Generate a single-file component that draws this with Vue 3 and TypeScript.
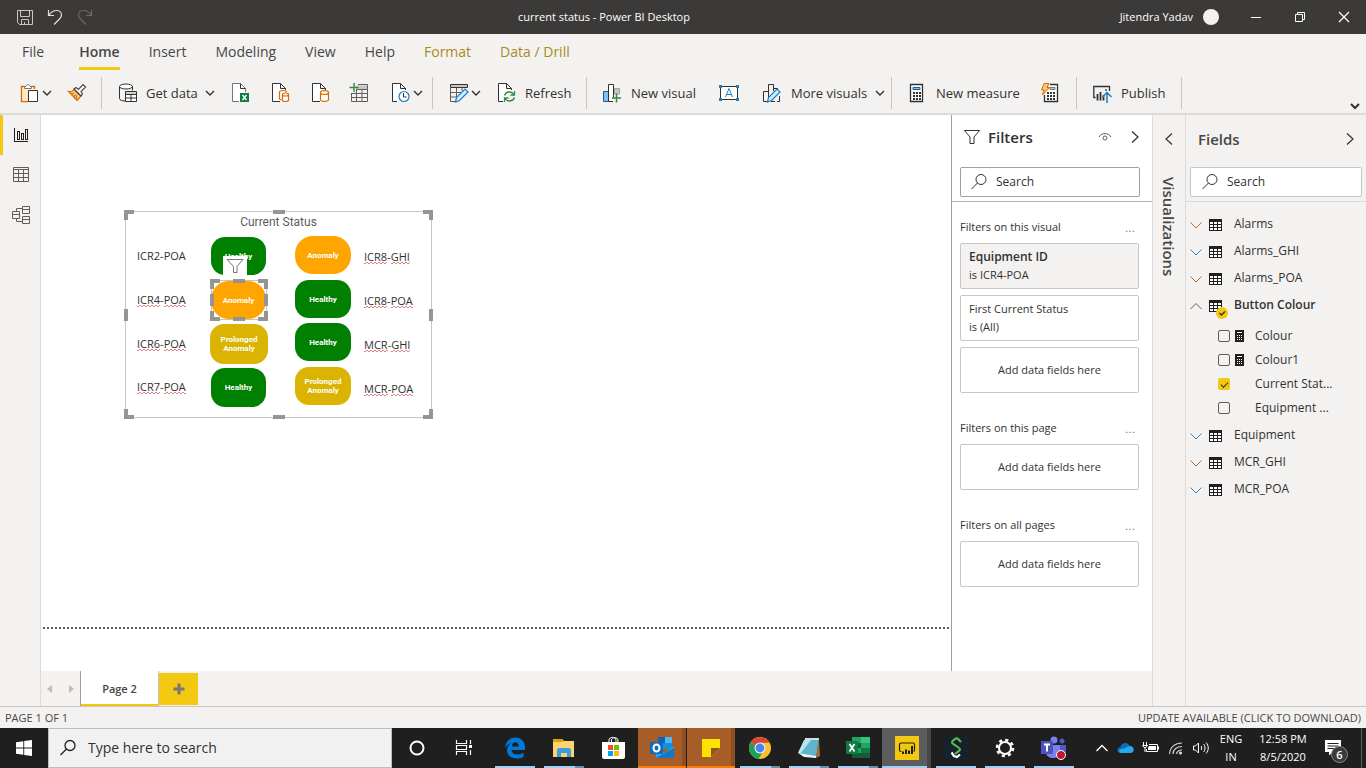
<script setup lang="ts">
import { ref } from 'vue'

interface Pill { text: string; kind: 'ok' | 'bad' | 'long'; x: number; y: number; w: number; h: number }
interface Label { parts: string[]; x: number; y: number; plain?: boolean }
interface Field { name: string; calc: boolean; checked: boolean }
interface TableItem { name: string; tint: string; fields?: Field[] }

const tabs = ['Home', 'Insert', 'Modeling', 'View', 'Help']
const contextTabs = ['Format', 'Data / Drill']
const handles = ['tl', 'tc', 'tr', 'ml', 'mr', 'bl', 'bc', 'br']

const pills: Pill[] = [
  { text: 'Healthy', kind: 'ok', x: 85, y: 25, w: 55, h: 38 },
  { text: 'Anomaly', kind: 'bad', x: 85, y: 69, w: 55, h: 38 },
  { text: 'Prolonged Anomaly', kind: 'long', x: 84, y: 112, w: 58, h: 40 },
  { text: 'Healthy', kind: 'ok', x: 85, y: 156, w: 55, h: 39 },
  { text: 'Anomaly', kind: 'bad', x: 169, y: 24, w: 56, h: 38 },
  { text: 'Healthy', kind: 'ok', x: 169, y: 68, w: 56, h: 38 },
  { text: 'Healthy', kind: 'ok', x: 169, y: 111, w: 56, h: 38 },
  { text: 'Prolonged Anomaly', kind: 'long', x: 169, y: 155, w: 56, h: 38 },
]
const labels: Label[] = [
  { parts: ['ICR2', 'POA'], x: 11, y: 36, plain: true },
  { parts: ['ICR4', 'POA'], x: 11, y: 80 },
  { parts: ['ICR6', 'POA'], x: 11, y: 124 },
  { parts: ['ICR7', 'POA'], x: 11, y: 167 },
  { parts: ['ICR8', 'GHI'], x: 238, y: 37 },
  { parts: ['ICR8', 'POA'], x: 238, y: 81 },
  { parts: ['MCR', 'GHI'], x: 238, y: 125 },
  { parts: ['MCR', 'POA'], x: 238, y: 169 },
]
const place = (o: { x: number; y: number }) => ({ left: o.x + 'px', top: o.y + 'px' })
const box = (p: Pill) => ({ ...place(p), width: p.w + 'px', height: p.h + 'px' })

const warm = '#b0703c'
const cool = '#3b82c4'
const tables = ref<TableItem[]>([
  { name: 'Alarms', tint: warm },
  { name: 'Alarms_GHI', tint: cool },
  { name: 'Alarms_POA', tint: warm },
  {
    name: 'Button Colour',
    tint: '#605e5c',
    fields: [
      { name: 'Colour', calc: true, checked: false },
      { name: 'Colour1', calc: true, checked: false },
      { name: 'Current Stat...', calc: false, checked: true },
      { name: 'Equipment ...', calc: false, checked: false },
    ],
  },
  { name: 'Equipment', tint: cool },
  { name: 'MCR_GHI', tint: warm },
  { name: 'MCR_POA', tint: cool },
])
const filterQuery = ref('')
const fieldQuery = ref('')
const taskQuery = ref('')
</script>

<template>
  <div class="app">
    <header class="titlebar">
      <div class="quick">
        <button aria-label="Save"><svg width="16" height="16" fill="none" stroke="#c8c6c4"><path d="M1 1.500H15.500V15.500H2.500L.500 13.500V1.500ZM3.500 1.500V7.500H12.500V1.500M4.500 15.500V10.500H11.500V15.500M7.500 13V15.500" /></svg></button>
        <button aria-label="Undo"><svg width="16" height="16" fill="none" stroke="#e1dfdd" stroke-width="1.200"><path d="M1.500 1V6.500H7M1.500 6.500C4 3 7 1.500 9.500 1.500C12.500 1.500 14.500 3.500 14.500 6C14.500 8 13.500 9 12.500 10L7 15.500" /></svg></button>
        <button aria-label="Redo"><svg width="16" height="16" fill="none" stroke="#6b6967" stroke-width="1.200"><path d="M14.500 1V6.500H9M14.500 6.500C12 3 9 1.500 6.500 1.500C3.500 1.500 1.500 3.500 1.500 6C1.500 8 2.500 9 3.500 10L9 15.500" /></svg></button>
      </div>
      <h1>current status - Power BI Desktop</h1>
      <div class="account">
        <span>Jitendra Yadav</span><i class="avatar"></i>
        <button aria-label="Minimize"><svg width="12" height="12" stroke="#fff"><path d="M1 6.500H11" /></svg></button>
        <button aria-label="Restore"><svg width="12" height="12" fill="none" stroke="#fff"><path d="M1.500 3.500H8.500V10.500H1.500ZM3.500 3.500V1.500H10.500V8.500H8.500" /></svg></button>
        <button aria-label="Close"><svg width="12" height="12" stroke="#fff" stroke-width="1.200"><path d="M1 1L11 11M11 1L1 11" /></svg></button>
      </div>
    </header>

    <nav class="tabs">
      <button class="file">File</button>
      <button v-for="t in tabs" :key="t" :class="{ active: t === 'Home' }">{{ t }}</button>
      <button v-for="t in contextTabs" :key="t" class="context">{{ t }}</button>
    </nav>

    <div class="ribbon">
      <div class="group first">
        <button aria-label="Paste">
          <svg class="ic" viewBox="0 0 20 20"><path d="M4.500 3.500H1.500V18.500H8M11 3.500H14.500V6" fill="none" stroke="#d86b00" stroke-width="1.400" /><path d="M2.500 4.500H13.500V6H8V18H2.500Z" fill="#fde8c4" /><path d="M4.500 5.500V3.500H6C6 1 10 1 10 3.500H11.500V5.500Z" fill="#fff" stroke="#797775" /><path d="M8.500 7.500H17.500V18.500H8.500Z" fill="#fff" stroke="#323130" /></svg>
          <svg class="chev" viewBox="0 0 10 10"><path d="M1 3L5 7L9 3" /></svg>
        </button>
        <button aria-label="Format painter">
          <svg class="ic" viewBox="0 0 20 20"><path d="M1.500 8.500C4 9 6 8 7 6.500L14 13C12.500 15 11 16.500 10 17.500Z" fill="#fbc27c" stroke="#d86b00" stroke-width="1.200" /><path d="M4 11L7 10.500M6.500 13.500L9 12L9.500 16" fill="none" stroke="#d86b00" /><path d="M7 6L9 4.500L11.500 6.500L16 1.500L18.500 4L14 8.500L15.500 11L14 13Z" fill="#fff" stroke="#484644" stroke-width="1.200" /></svg>
        </button>
      </div>
      <div class="group">
        <button>
          <svg class="ic" viewBox="0 0 20 20" fill="none" stroke="#323130"><ellipse cx="8" cy="3.500" rx="6.500" ry="2.500" fill="#fff" /><path d="M1.500 3.500V15.500C1.500 17 4 18 7 18M14.500 3.500V7.500" /><path d="M7.500 8.500H18.500V18.500H7.500Z" fill="#fff" /><path d="M7.500 11.500H18.500M13 11.500V18.500M7.500 15H18.500" /><path d="M8 10H18" stroke="#a19f9d" /></svg>
          <span>Get data</span>
          <svg class="chev" viewBox="0 0 10 10"><path d="M1 3L5 7L9 3" /></svg>
        </button>
        <button aria-label="Excel workbook">
          <svg class="ic" viewBox="0 0 20 20"><path d="M8 18.500H1.500V.500H9.500L14.500 5.500V9" fill="#fff" stroke="#797775" /><path d="M9.500 .500V5.500H14.500" fill="none" stroke="#323130" /><path d="M9 10H18V19H9Z" fill="#107c41" /><path d="M11.500 12L15.500 17M15.500 12L11.500 17" stroke="#fff" stroke-width="1.300" /></svg>
        </button>
        <button aria-label="Power BI datasets">
          <svg class="ic" viewBox="0 0 20 20" fill="none" stroke="#323130"><path d="M9 18.500H1.500V.500H9.500L14.500 5.500V7M9.500 .500V5.500H14.500" fill="#fff" /><path d="M8.500 9V15.500C8.500 16.500 9.500 17 10.500 17M8.500 9C8.500 7 15.500 7 15.500 9" stroke="#d86b00" stroke-width="1.200" /><path d="M11.500 11.500V17C11.500 19 17.500 19 17.500 17V11.500C17.500 9.500 11.500 9.500 11.500 11.500C11.500 13.500 17.500 13.500 17.500 11.500" fill="#fff" stroke="#d86b00" stroke-width="1.200" /></svg>
        </button>
        <button aria-label="SQL Server">
          <svg class="ic" viewBox="0 0 20 20" fill="none" stroke="#323130"><path d="M9 18.500H1.500V.500H9.500L14.500 5.500V7M9.500 .500V5.500H14.500" fill="#fff" /><path d="M9.500 9.500V16.500C9.500 19 17.500 19 17.500 16.500V9.500C17.500 7 9.500 7 9.500 9.500C9.500 12 17.500 12 17.500 9.500" fill="#fff" stroke="#d86b00" stroke-width="1.200" /></svg>
        </button>
        <button aria-label="Enter data">
          <svg class="ic" viewBox="2 0 20 20" fill="none" stroke="#605e5c"><path d="M7 2.500H18.500V6H7Z" fill="#c8c6c4" stroke="none" /><path d="M2.500 10V18.500H18.500V1.500H9M7.500 6.500V18.500M13 6.500V18.500M7 6.500H18.500M2.500 10.500H18.500M2.500 14.500H18.500" /><path d="M5 0V9M.500 4.500H9.500" stroke="#2e8b46" stroke-width="1.400" /></svg>
        </button>
        <button aria-label="Recent sources">
          <svg class="ic" viewBox="0 0 20 20" fill="none" stroke="#323130"><path d="M6 18.500H1.500V.500H9.500L14.500 5.500V7M9.500 .500V5.500H14.500" fill="#fff" /><circle cx="13" cy="13.500" r="5" fill="#fff" stroke="#1a7fc4" stroke-width="1.200" /><path d="M12.500 10V14H15.500" /></svg>
          <svg class="chev" viewBox="0 0 10 10"><path d="M1 3L5 7L9 3" /></svg>
        </button>
      </div>
      <div class="group">
        <button aria-label="Transform data">
          <svg class="ic" viewBox="0 0 20 20" fill="none" stroke="#323130"><path d="M1.500 1.500H18.500V4.500H1.500Z" fill="#c8c6c4" /><path d="M1.500 4.500V18.500H6M7.500 4.500V15M13 4.500V8M1.500 9.500H12M1.500 14H8" stroke="#605e5c" /><path d="M6.500 19L7.500 14.500L16 6L19 9L10.500 17.500Z" fill="#d5eafa" stroke="#1a7fc4" stroke-width="1.200" /></svg>
          <svg class="chev" viewBox="0 0 10 10"><path d="M1 3L5 7L9 3" /></svg>
        </button>
        <button>
          <svg class="ic" viewBox="0 0 20 20" fill="none" stroke="#323130"><path d="M6 18.500H1.500V.500H9.500L14.500 5.500V7M9.500 .500V5.500H14.500" fill="#fff" /><path d="M7.500 12.500C9 8 15 8 17 11.500M17.500 8V12H13.500M17.500 14.500C16 19 10 19 8 15.500M7.500 19V15H11.500" stroke="#2e8b46" stroke-width="1.300" /></svg>
          <span>Refresh</span>
        </button>
      </div>
      <div class="group wide">
        <button>
          <svg class="ic" viewBox="0 0 20 20"><path d="M1.500 8.500H6.500V18.500H1.500Z" fill="#83beec" stroke="#1a5c96" /><path d="M12.500 5.500H17.500V11H12.500Z" fill="#c8c6c4" stroke="#a19f9d" /><path d="M11 18.500H6.500V1.500H11.500V15" fill="#fff" stroke="#323130" /><path d="M14.500 10.500V19.500M10 15H19" stroke="#2e8b46" stroke-width="1.500" /></svg>
          <span>New visual</span>
        </button>
        <button aria-label="Text box">
          <svg class="ic" viewBox="0 0 20 20"><path d="M1.500 3.500H18.500V16.500H1.500Z" fill="#fff" stroke="#323130" /><path d="M6.500 14L10 5.500L13.500 14M7.700 11.500H12.300" fill="none" stroke="#1a7fc4" /><path d="M0 2H3V5H0ZM17 2H20V5H17ZM0 15H3V18H0ZM17 15H20V18H17Z" fill="#1a7fc4" /></svg>
        </button>
        <button>
          <svg class="ic" viewBox="0 0 20 20" fill="none" stroke="#323130"><path d="M5 18.500H1.500V8.500H6.500V15M6.500 10V1.500H11.500V8M11.500 5.500H16M15 18.500H17.500V13M9 18.500H13" /><path d="M5.500 19L6.500 14.500L15 6L18 9L9.500 17.500Z" fill="#d5eafa" stroke="#1a7fc4" stroke-width="1.200" /></svg>
          <span>More visuals</span>
          <svg class="chev" viewBox="0 0 10 10"><path d="M1 3L5 7L9 3" /></svg>
        </button>
      </div>
      <div class="group">
        <button>
          <svg class="ic" viewBox="0 0 20 20"><path d="M2.500 1.500H14.500V18.500H2.500Z" fill="#fff" stroke="#323130" stroke-width="1.300" /><path d="M5 4.500H12V6.500H5Z" fill="#83beec" stroke="#1a5c96" /><path d="M5 9H7V11H5ZM8 9H10V11H8ZM11 9H13V11H11ZM5 12H7V14H5ZM8 12H10V14H8ZM11 12H13V14H11ZM5 15H7V17H5ZM8 15H10V17H8ZM11 15H13V17H11Z" fill="#323130" /></svg>
          <span>New measure</span>
        </button>
        <button aria-label="Quick measure">
          <svg class="ic" viewBox="0 0 20 20"><path d="M10 1.500H17.500V18.500H4.500V12" fill="#fff" stroke="#323130" stroke-width="1.300" /><path d="M10 4.500H15V6.500H10Z" fill="#c8c6c4" stroke="#797775" /><path d="M7 9H9V11H7ZM10 9H12V11H10ZM13 9H15V11H13ZM7 12H9V14H7ZM10 12H12V14H10ZM13 12H15V14H13ZM7 15H9V17H7ZM10 15H12V17H10ZM13 15H15V17H13Z" fill="#323130" /><path d="M4 .500H9L7 4.500H9.500L2.500 12L4 7H1.500Z" fill="#fbc27c" stroke="#d86b00" /></svg>
        </button>
      </div>
      <div class="group">
        <button>
          <svg class="ic" viewBox="1 0 20 20" fill="none" stroke="#323130" stroke-width="1.300"><path d="M3.500 14.500H1.800V3.500H17.500V8" /><path d="M5.500 11V17.500M8.500 9V17.500M11.500 12V17.500" stroke-width="1.800" /><path d="M15 20V10M10.500 14L15 9.500L19.500 14" stroke="#1a7fc4" stroke-width="1.500" /><path d="M14 8V6" /></svg>
          <span>Publish</span>
        </button>
      </div>
      <button class="collapse" aria-label="Collapse ribbon"><svg width="10" height="8" fill="none" stroke="#323130" stroke-width="2"><path d="M1 2L5 6L9 2" /></svg></button>
    </div>

    <main class="body">
      <nav class="views">
        <button class="on" aria-label="Report view"><svg width="18" height="18" fill="none" stroke="#201f1e" shape-rendering="crispEdges"><path d="M2.500 2V15.500H16M5.500 5.500H7.500V13.500H5.500ZM9.500 7.500H11.500V13.500H9.500ZM13.500 3.500H15.500V13.500H13.500Z" /></svg></button>
        <button aria-label="Data view"><svg width="18" height="18" fill="none" stroke="#605e5c"><path d="M2.500 1.500H17.500V15.500H2.500ZM2.500 3.500H17.500M2.500 7.500H17.500M2.500 11.500H17.500M7.500 3.500V15.500M12.500 3.500V15.500" /></svg></button>
        <button aria-label="Model view"><svg width="20" height="20" fill="none" stroke="#605e5c"><path d="M2.500 6.500H9.500V13.500H2.500ZM2.500 9.500H9.500M12.500 1.500H19.500V8.500H12.500ZM12.500 4.500H19.500M12.500 11.500H19.500V18.500H12.500ZM12.500 14.500H19.500M6.500 6.500V3.500H12.500M6.500 13.500V16.500H12.500" /></svg></button>
      </nav>

      <div class="center">
        <div class="workspace">
          <section class="canvas">
            <div class="page">
              <div class="visual frame">
                <h2>Current Status</h2>
                <button v-for="(p, i) in pills" :key="i" class="pill" :class="p.kind" :style="box(p)">{{ p.text }}</button>
                <p v-for="(l, i) in labels" :key="i" class="label" :class="{ plain: l.plain }" :style="place(l)"><span>{{ l.parts[0] }}</span>-<span>{{ l.parts[1] }}</span></p>
                <div class="funnel"><svg width="20" height="18" fill="none" stroke="#797775"><path d="M2 2.500H18L12 9.500V15.500H8.500V9.500Z" /></svg></div>
                <div class="selection frame"><i v-for="h in handles" :key="h" :class="h"></i></div>
                <i v-for="h in handles" :key="h" :class="h"></i>
              </div>
            </div>
          </section>

          <aside class="filters">
            <div class="pane-top">
              <div class="pane-head">
                <svg width="18" height="16" fill="none" stroke="#323130"><path d="M1.500 1.500H16.500L11 8V14.500H7V8Z" /></svg>
                <h2>Filters</h2>
                <button aria-label="Show filters to viewers"><svg width="14" height="10" fill="none" stroke="#605e5c"><path d="M1 5C3 .500 11 .500 13 5" /><circle cx="7" cy="6" r="2" /></svg></button>
                <button aria-label="Collapse filters"><svg width="10" height="14" fill="none" stroke="#323130" stroke-width="1.200"><path d="M2 1.500L8 7L2 12.500" /></svg></button>
              </div>
              <label class="search"><svg width="18" height="18" fill="none" stroke="#323130"><circle cx="11" cy="6.500" r="5" /><path d="M7.500 10L1.500 16" /></svg><input v-model="filterQuery" placeholder="Search" aria-label="Search filters" /></label>
            </div>
            <div class="filter-list">
              <section>
                <h3>Filters on this visual <button aria-label="More options">...</button></h3>
                <button class="card applied"><b>Equipment ID</b><span>is ICR4-POA</span></button>
                <button class="card"><span>First Current Status</span><span>is (All)</span></button>
                <button class="card drop">Add data fields here</button>
              </section>
              <section>
                <h3>Filters on this page <button aria-label="More options">...</button></h3>
                <button class="card drop">Add data fields here</button>
              </section>
              <section>
                <h3>Filters on all pages <button aria-label="More options">...</button></h3>
                <button class="card drop">Add data fields here</button>
              </section>
            </div>
          </aside>
        </div>

        <div class="pages">
          <div class="arrows">
            <button aria-label="Previous page"><svg width="6" height="8" fill="#bebbb8"><path d="M5 0V8L0 4Z" /></svg></button>
            <button aria-label="Next page"><svg width="6" height="8" fill="#bebbb8"><path d="M1 0V8L6 4Z" /></svg></button>
          </div>
          <button class="page-tab">Page 2</button>
          <button class="add" aria-label="New page"><svg width="12" height="12" stroke="#797775" stroke-width="3"><path d="M6 .500V11.500M.500 6H11.500" /></svg></button>
        </div>
      </div>

      <aside class="viz">
        <button aria-label="Expand visualizations"><svg width="10" height="14" fill="none" stroke="#323130" stroke-width="1.200"><path d="M8 1.500L2 7L8 12.500" /></svg></button>
        <h2>Visualizations</h2>
      </aside>

      <aside class="fields">
        <div class="pane-top">
          <div class="pane-head">
            <h2>Fields</h2>
            <button aria-label="Collapse fields"><svg width="10" height="14" fill="none" stroke="#323130" stroke-width="1.200"><path d="M2 1.500L8 7L2 12.500" /></svg></button>
          </div>
          <label class="search"><svg width="18" height="18" fill="none" stroke="#323130"><circle cx="11" cy="6.500" r="5" /><path d="M7.500 10L1.500 16" /></svg><input v-model="fieldQuery" placeholder="Search" aria-label="Search fields" /></label>
        </div>
        <ul class="tree">
          <li v-for="t in tables" :key="t.name">
            <button class="table-row" :class="{ open: t.fields }">
              <svg class="arrow" width="12" height="8" fill="none" :stroke="t.tint"><path :d="t.fields ? 'M.5 7L6 1.500L11.500 7' : 'M.5 1.500L6 7L11.500 1.500'" /></svg>
              <span class="tbl"><svg width="13" height="12"><path d="M0 0H13V12H0Z" fill="#201f1e" /><path d="M1 3H4V5H1ZM5 3H8V5H5ZM9 3H12V5H9ZM1 6H4V8H1ZM5 6H8V8H5ZM9 6H12V8H9ZM1 9H4V11H1ZM5 9H8V11H5ZM9 9H12V11H9Z" fill="#fff" /></svg><svg v-if="t.fields" class="badge" width="12" height="12" fill="none"><circle cx="6" cy="6" r="6" fill="#f2c811" /><path d="M3.500 6L5.500 8L9 4.500" stroke="#323130" stroke-width="1.400" /></svg></span>
              <span class="name">{{ t.name }}</span>
            </button>
            <ul v-if="t.fields" class="children">
              <li v-for="f in t.fields" :key="f.name">
                <label>
                  <input v-model="f.checked" type="checkbox" />
                  <svg width="9" height="12"><template v-if="f.calc"><path d="M0 0H9V12H0Z" fill="#201f1e" /><path d="M2 2H7V3H2ZM2 5H3V6H2ZM4 5H5V6H4ZM6 5H7V6H6ZM2 7H3V8H2ZM4 7H5V8H4ZM6 7H7V8H6ZM2 9H3V10H2ZM4 9H5V10H4ZM6 9H7V10H6Z" fill="#fff" /></template></svg>
                  <span>{{ f.name }}</span>
                </label>
              </li>
            </ul>
          </li>
        </ul>
      </aside>
    </main>

    <footer class="status"><span>PAGE 1 OF 1</span><a href="#">UPDATE AVAILABLE (CLICK TO DOWNLOAD)</a></footer>

    <div class="taskbar">
      <button class="start" aria-label="Start"><svg width="16" height="16" fill="#fff"><path d="M0 2.300L7.300 1.200V7.600H0ZM8.200 1.100L16 0V7.600H8.200ZM0 8.400H7.300V14.800L0 13.700ZM8.200 8.400H16V16L8.200 14.900Z" /></svg></button>
      <label class="task-search"><svg width="18" height="18" fill="none" stroke="#201f1e" stroke-width="1.300"><circle cx="11" cy="6.500" r="5" /><path d="M7.500 10L1.500 16" /></svg><input v-model="taskQuery" placeholder="Type here to search" aria-label="Type here to search" /></label>
      <div class="apps">
        <button aria-label="Cortana"><svg width="24" height="24" fill="none"><circle cx="12" cy="12" r="6.500" stroke="#fff" stroke-width="2" /></svg></button>
        <button aria-label="Task view"><svg width="24" height="24" fill="none" stroke="#fff" stroke-width="1.200"><path d="M2.500 4V7.500H12.500V4M2.500 19V15.500H12.500V19M2.500 9.500H12.500V13.500H2.500ZM16.500 4V8M16.500 14V19" /><path d="M15 9H18V12H15Z" fill="#fff" stroke="none" /></svg></button>
        <button class="run" aria-label="Edge"><svg width="24" height="24"><path d="M2 12C2.500 5 7 1.500 12.500 1.500C18.500 1.500 22 6 22 11V14H8.500C8.800 17 11 18.500 14 18.500C16.500 18.500 18.500 18 20.500 16.500V21C18.500 22 16 22.500 13.500 22.500C7.500 22.500 4 19 4 14.500C4 11 6 8 9 7C5.500 7.500 3.500 9.500 2 12ZM8.800 10.500H15.700C15.700 8 14.500 6.300 12.300 6.300C10 6.300 9 8.500 8.800 10.500Z" fill="#0078d7" fill-rule="evenodd" /></svg></button>
        <button class="run multi" aria-label="File Explorer"><svg width="24" height="24"><path d="M1 3H10L12 5H22V21H1Z" fill="#fbd46d" /><path d="M1 3H10L12 5L10 6H1Z" fill="#e0a100" /><path d="M5 21V14C5 13 6 12 7 12H17C18 12 19 13 19 14V21H15V17H9V21Z" fill="#3d9be0" /></svg></button>
        <button aria-label="Store"><svg width="24" height="24"><path d="M8 7V4C8 .500 15 .500 15 4V7M10.500 7V4C10.500 1 17 1 17 4V7" fill="none" stroke="#fff" /><path d="M1 6H24V21C24 22 23 23 22 23H3C2 23 1 22 1 21Z" fill="#fff" /><path d="M7 9H12V14H7Z" fill="#f25022" /><path d="M13 9H18V14H13Z" fill="#7fba00" /><path d="M7 15H12V20H7Z" fill="#00a4ef" /><path d="M13 15H18V20H13Z" fill="#ffb900" /></svg></button>
        <button class="alert" aria-label="Outlook"><svg width="24" height="24"><path d="M8 1H22V13H8Z" fill="#1490df" /><path d="M8 1H15V7H8Z" fill="#0f63b0" /><path d="M15 1H22V7H15Z" fill="#50b8f5" /><path d="M6 12L15 17L24 10V22H6Z" fill="#28a8ea" /><path d="M6 22L24 12V22Z" fill="#1477c9" /><path d="M0 6H13V18H0Z" fill="#0f6cbd" /><ellipse cx="6.500" cy="12" rx="3" ry="3.500" fill="none" stroke="#fff" stroke-width="2" /></svg></button>
        <button class="alert" aria-label="Sticky Notes"><svg width="24" height="24"><path d="M3 3H21V12L12 21H3Z" fill="#ffe100" /><path d="M12 12H21L12 21Z" fill="#8a5a16" /></svg></button>
        <button class="run multi" aria-label="Chrome"><svg width="24" height="24"><circle cx="12" cy="12" r="11" fill="#fbc02d" /><path d="M12 12L2.500 6.500A11 11 0 0 0 10.500 22.900L16 14Z" fill="#1da05a" /><path d="M12 12L2.500 6.500A11 11 0 0 1 21.500 6.700H12Z" fill="#db4437" /><circle cx="12" cy="12" r="5.500" fill="#f1f1f1" /><circle cx="12" cy="12" r="4.400" fill="#4285f4" /></svg></button>
        <button class="run multi" aria-label="Notepad"><svg width="24" height="24"><path d="M22 3L23 20L19 22Z" fill="#a8721f" /><path d="M8 3L22 3L19 22L1 17Z" fill="#5fb4c9" /><path d="M7 4L14 4L4 17L1 17Z" fill="#b8e4ec" /><path d="M1 17L19 20L19 22L7 21Z" fill="#e9f5f7" /><path d="M8 2H22V4H8Z" fill="#d5dde0" /></svg></button>
        <button class="run multi" aria-label="Excel"><svg width="24" height="24"><path d="M6 1H24V22H6Z" fill="#21a366" /><path d="M15 1H24V7H15Z" fill="#33c481" /><path d="M6 7H15V12H6ZM6 17H24V22H6Z" fill="#185c37" /><path d="M15 12H24V17H15Z" fill="#107c41" /><path d="M0 5H12V18H0Z" fill="#107c41" /><path d="M3.500 8L8.500 15.500M8.500 8L3.500 15.500" stroke="#fff" stroke-width="1.800" /></svg></button>
        <button class="run current" aria-label="Power BI Desktop"><svg width="24" height="24"><path d="M0 0H24V24H0Z" fill="#f2c811" /><path d="M6.500 15.500H6C5 15.500 4.500 15 4.500 14V8.500C4.500 7.500 5 7 6 7H18C19 7 19.500 7.500 19.500 8.500V14C19.500 15 19 15.500 18.500 15.500" fill="none" stroke="#201f1e" stroke-width="1.200" /><path d="M8 18V15.500M11 18V13.500M14 18V14.500M17 18V10" stroke="#201f1e" stroke-width="2" /></svg></button>
        <button class="run" aria-label="Editor"><svg width="24" height="24" fill="none"><path d="M0 0H24V24H0Z" fill="#17212b" /><path d="M17 6L13.500 2.500C12 2 8 4.500 8 6.500C8 8.500 16 11 16 13.500C16 15 13 16 11 18" stroke="#5cb94b" stroke-width="2.200" /><path d="M7.500 16.500L10 20L13 21L16 18.500" stroke="#fff" stroke-width="2.200" /></svg></button>
        <button class="run" aria-label="Settings"><svg width="24" height="24" fill="none" stroke="#fff"><circle cx="12" cy="12" r="6" stroke-width="2" /><circle cx="12" cy="12" r="8" stroke-width="2.500" stroke-dasharray="3.140 3.140" /></svg></button>
        <button class="run" aria-label="Teams"><svg width="26" height="24"><circle cx="13" cy="4" r="3.500" fill="#7b83eb" /><circle cx="21" cy="5" r="2.500" fill="#5059c9" /><path d="M15 9H25V15C25 20 17 21 15 17Z" fill="#5059c9" /><path d="M5 9H19V16C19 24 5 24 5 16Z" fill="#7b83eb" /><path d="M0 5H12V18H0Z" fill="#4b53bc" /><path d="M3 8.500H9M6 8.500V15.500" stroke="#fff" stroke-width="2" /><circle cx="20" cy="19" r="4.500" fill="#c4122f" stroke="#fff" /></svg></button>
      </div>
      <div class="tray">
        <button aria-label="Hidden icons"><svg width="14" height="10" fill="none" stroke="#fff" stroke-width="1.300"><path d="M1.500 8L7 2.500L12.500 8" /></svg></button>
        <button aria-label="OneDrive"><svg width="17" height="12"><path d="M4 11C-1 11-.500 5 3.500 5C4.500 0 11-.500 12.500 4C18 4 18 11 13 11Z" fill="#0f6cbd" /><path d="M4 11C1 11 2 6 6 7L12.500 4C18 4 18 11 13 11Z" fill="#28a8ea" /></svg></button>
        <button aria-label="Battery"><svg width="18" height="12" fill="none" stroke="#fff"><path d="M7 2.500H15.500V9.500H4.500V7M16.500 4.500V7.500" /><path d="M7 4H14V8H6V6Z" fill="#fff" stroke="none" /><path d="M1.500 0V3M4.500 0V3M.500 3.500H5.500L4 5.500H2ZM3 5V10" /></svg></button>
        <button aria-label="Network"><svg width="16" height="14" fill="none" stroke="#d2d0ce" stroke-width="1.200"><path d="M1.500 13C2 6 7 2 14 2M5 13C5 8.500 9 5.500 14 5.500M8.500 13C8.500 11 11 9 14 9" /><circle cx="12.500" cy="12" r="1" fill="#fff" /></svg></button>
        <button aria-label="Volume"><svg width="18" height="14" fill="none" stroke="#fff"><path d="M1.500 5V9H3.500L6.500 12V2L3.500 5ZM9 5C10 6 10 8 9 9M11.500 3C13.500 5 13.500 9 11.500 11M14 1.500C17 4.500 17 9.500 14 12.500" /></svg></button>
        <button class="lang">ENG<br />IN</button>
        <button class="clock">12:58 PM<br />8/5/2020</button>
        <button class="note" aria-label="Notifications"><svg width="18" height="16" fill="#fff"><path d="M0 0H16V12H8L4 15.500V12H0Z" /><path d="M2.500 3.500H13.500M2.500 6H13.500M2.500 8.500H13.500" stroke="#1f1f1f" /></svg><span>6</span></button>
        <i class="peek"></i>
      </div>
    </div>
  </div>
</template>

<style>
html, body { margin: 0; }
</style>

<style scoped>
* { box-sizing: border-box; }
.app { display: flex; flex-direction: column; min-height: 100vh; font-family: "Open Sans", "Noto Sans", sans-serif; color: #323130; background: #f3f2f1; font-size: 12px; line-height: 18px; }
button { font: inherit; color: inherit; background: none; border: 0; padding: 0; margin: 0; display: flex; align-items: center; justify-content: center; white-space: nowrap; cursor: pointer; }
h1, h2, h3, p, ul { margin: 0; padding: 0; list-style: none; font-weight: 400; }
svg { display: block; flex: none; }
input { font: inherit; color: inherit; min-width: 0; }

.titlebar { height: 34px; background: #3b3a39; color: #fff; display: grid; grid-template-columns: 1fr auto 1fr; align-items: center; }
.titlebar h1 { font-size: 11px; padding-right: 158px; }
.quick { display: flex; gap: 14px; padding-left: 17px; }
.account { display: flex; align-items: center; justify-content: flex-end; font-size: 11px; }
.avatar { width: 16px; height: 16px; border-radius: 8px; background: #f3f2f1; margin: 0 15px 0 10px; }
.account button { width: 44px; height: 34px; }

.tabs { height: 39px; display: flex; gap: 29px; padding-left: 22px; font-size: 14px; color: #484644; }
.tabs button { height: 36px; padding-top: 2px; border-bottom: 3px solid transparent; }
.tabs .file { margin-right: 6px; }
.tabs .active { font-weight: 600; border-color: #f2c811; }
.tabs .context { color: #a98a1c; }

.ribbon { height: 40px; display: grid; grid-template-columns: 102px 331px 154px 305px 185px 105px 1fr; font-size: 13px; }
.group { display: flex; align-items: center; gap: 20px; padding-left: 16px; border-right: 1px solid #c8c6c4; height: 32px; margin-top: 4px; }
.group.first { padding-left: 20px; }
.group.wide { gap: 23px; padding-left: 15px; }
.group button { gap: 8px; }
.group.wide button { gap: 9px; }
.group button[aria-label] { gap: 3px; }
.group button:has(.chev) + button { margin-left: -4px; }
.group.first button:has(.chev) + button { margin-left: -5px; }
.group .chev { margin-left: -1px; }
.ic { width: 20px; height: 20px; overflow: visible; }
.chev { width: 10px; height: 10px; fill: none; stroke: #323130; stroke-width: 1.4; }
.collapse { align-self: end; justify-self: end; padding: 0 6px 3px 0; }

.body { flex: 1; display: flex; border-top: 2px solid #dcdbda; min-height: 0; }
.views { width: 41px; border-right: 1px solid #dcdbda; }
.views button { width: 40px; height: 40px; }
.views .on { border-left: 3px solid #f2c811; padding-right: 2px; }
.center { flex: 1; display: flex; flex-direction: column; min-width: 0; }
.workspace { flex: 1; display: flex; }
.canvas { flex: 1; background: #fff; padding: 0 2px 42px; display: flex; }
.page { flex: 1; position: relative; border-bottom: 2px dotted #605e5c; }

.frame { position: absolute; border: 1px solid #c8c6c4; }
.visual { left: 82px; top: 96px; width: 307px; height: 207px; }
.visual h2 { font: 12px/20px Roboto, sans-serif; color: #605e5c; text-align: center; }
.frame > i { position: absolute; width: 10px; height: 10px; border: 0 solid #979593; }
.frame > .tl { left: -2px; top: -2px; border-width: 4px 0 0 4px; }
.frame > .tr { right: -2px; top: -2px; border-width: 4px 4px 0 0; }
.frame > .bl { left: -2px; bottom: -2px; border-width: 0 0 4px 4px; }
.frame > .br { right: -2px; bottom: -2px; border-width: 0 4px 4px 0; }
.frame > .tc, .frame > .bc { left: calc(50% - 6px); width: 12px; height: 4px; background: #979593; border: 0; }
.frame > .ml, .frame > .mr { top: calc(50% - 6px); width: 4px; height: 12px; background: #979593; border: 0; }
.frame > .tc { top: -2px; }
.frame > .bc { bottom: -2px; }
.frame > .ml { left: -2px; }
.frame > .mr { right: -2px; }
.pill { position: absolute; border-radius: 14px; color: #fff; font: 700 8px/9px Roboto, sans-serif; white-space: normal; padding: 0 8px; }
.ok { background: #008000; }
.bad { background: #ffa500; border-radius: 18px; }
.long { background: #dab400; }
.selection { left: 85px; top: 68px; width: 56px; height: 40px; }
.funnel { position: absolute; left: 97px; top: 44px; width: 24px; height: 20px; background: #fff; padding: 1px 2px; }
.label { position: absolute; font-size: 11px; line-height: 16px; }
.label span { background: repeating-linear-gradient(90deg, #e58080 0 2px, transparent 2px 4px) 0 100% / 100% 1px no-repeat, repeating-linear-gradient(90deg, transparent 0 2px, #e58080 2px 4px) 0 calc(100% - 1px) / 100% 1px no-repeat; }
.label.plain span { background: none; }

.filters { width: 201px; background: #fff; border-left: 1px solid #a19f9d; }
.pane-top { height: 87px; padding: 0 12px 0 8px; border-bottom: 1px solid #b3b0ad; }
.pane-head { height: 52px; display: flex; align-items: center; padding: 0 0 8px 3px; }
.pane-head h2 { font-size: 15px; font-weight: 600; flex: 1; padding-left: 7px; }
.pane-head button + button { margin-left: 18px; }
.search { display: flex; align-items: center; height: 30px; border: 1px solid #a19f9d; border-radius: 2px; background: #fff; padding-left: 9px; font-size: 12px; }
.search input { flex: 1; border: 0; outline: 0; background: none; padding: 0 0 0 8px; }
input::placeholder { color: #323130; opacity: 1; }
.filter-list { padding: 17px 13px 0 8px; font-size: 11px; }
.filter-list section { display: flex; flex-direction: column; gap: 6px; margin-bottom: 27px; }
.filter-list h3 { height: 18px; display: flex; justify-content: space-between; align-items: flex-start; font-size: 11px; line-height: 16px; }
.filter-list h3 button { padding-right: 4px; font-size: 14px; font-weight: 300; color: #605e5c; }
.card { height: 46px; border: 1px solid #c8c6c4; border-radius: 2px; flex-direction: column; align-items: flex-start; padding: 0 8px; }
.card.drop { align-items: center; }
.card.applied { background: #f3f2f1; }
.card b { font-size: 12px; font-weight: 600; }

.pages { height: 35px; display: flex; align-items: stretch; }
.arrows { width: 39px; display: flex; align-items: center; justify-content: space-between; padding: 0 6px; }
.page-tab { width: 79px; background: #fff; border: solid #a19f9d; border-width: 0 1px 0 1px; border-right-color: #c8c6c4; font-size: 11px; font-weight: 600; color: #484644; box-shadow: inset 0 -2px #f2c811; }
.add { width: 39px; background: #f2c811; margin: 2px 0 1px; }

.viz { width: 33px; border-left: 1px solid #dcdbda; display: flex; flex-direction: column; align-items: center; gap: 31px; padding-top: 17px; }
.viz h2 { writing-mode: vertical-rl; font-size: 15px; font-weight: 600; color: #484644; line-height: 20px; }
.fields { width: 181px; border-left: 1px solid #dcdbda; }
.fields .pane-top { padding: 0 4px; border-color: #dcdbda; }
.fields .pane-head { padding: 0 7px 4px 0; }
.fields .pane-head h2 { color: #484644; padding-left: 8px; }
.fields .search { border-color: #c8c6c4; padding-left: 10px; }
.tree { padding-top: 9px; font-size: 12px; }
.table-row { height: 27px; width: 100%; justify-content: flex-start; padding-left: 4px; }
.table-row.open { font-weight: 600; }
.name { padding-bottom: 2px; }
.tbl { position: relative; margin: 0 12px 0 7px; }
.badge { position: absolute; left: 7px; top: 7px; }
.children { padding: 5px 0 2px 32px; }
.children label { height: 24px; display: flex; align-items: center; }
.children svg { margin: 0 11px 0 5px; }
.children input { appearance: none; width: 12px; height: 12px; margin: 0; border: 1px solid #605e5c; border-radius: 2px; display: grid; place-content: center; }
.children input:checked { background: #f2c811; border-color: #f2c811; }
.children input:checked::after { content: ""; width: 6px; height: 3px; border: solid #323130; border-width: 0 0 1px 1px; transform: rotate(-45deg); }

.status { height: 22px; border-top: 1px solid #c8c6c4; display: flex; align-items: center; justify-content: space-between; padding: 0 5px; font-size: 11px; color: #484644; }
.status a { color: inherit; text-decoration: none; }

.taskbar { height: 40px; background: #1f1f1f; display: flex; color: #fff; }
.start { width: 48px; }
.task-search { width: 344px; background: #f1f1f1; border: 1px solid #bebbb8; display: flex; align-items: center; padding-left: 10px; color: #323130; font-size: 14px; }
.task-search input { flex: 1; border: 0; outline: 0; background: none; padding: 0 0 0 11px; }
.apps { display: flex; }
.apps button { width: 49px; position: relative; }
.apps .run::after { content: ""; position: absolute; left: 5px; right: 4px; bottom: 0; height: 2px; background: #9fd0f8; }
.apps .multi::after { background: linear-gradient(90deg, #9fd0f8 31px, #6b8ea8 31px); }
.apps .alert { background: #a65d27; border: solid #1f1f1f; border-width: 0 0 0 1px; box-shadow: inset 0 -2px #ff7a00, inset -4px 0 #8d4f22; }
.apps .current { background: #5d5d5d; box-shadow: inset -4px 0 #474747; }
.apps .current::after { left: 0; }
.tray { flex: 1; display: flex; align-items: stretch; justify-content: flex-end; font-size: 11px; }
.tray button { margin-right: 8px; }
.tray .lang { width: 26px; margin-right: 12px; }
.tray .clock { width: 54px; margin-right: 15px; }
.tray .note { width: 28px; position: relative; justify-content: flex-start; }
.note span { position: absolute; left: 6px; top: 18px; width: 17px; height: 17px; border: 1px solid #8a8886; border-radius: 9px; background: #3b3a39; font-size: 11px; line-height: 15px; font-weight: 600; }
.peek { width: 5px; border-left: 1px solid #605e5c; }
</style>
